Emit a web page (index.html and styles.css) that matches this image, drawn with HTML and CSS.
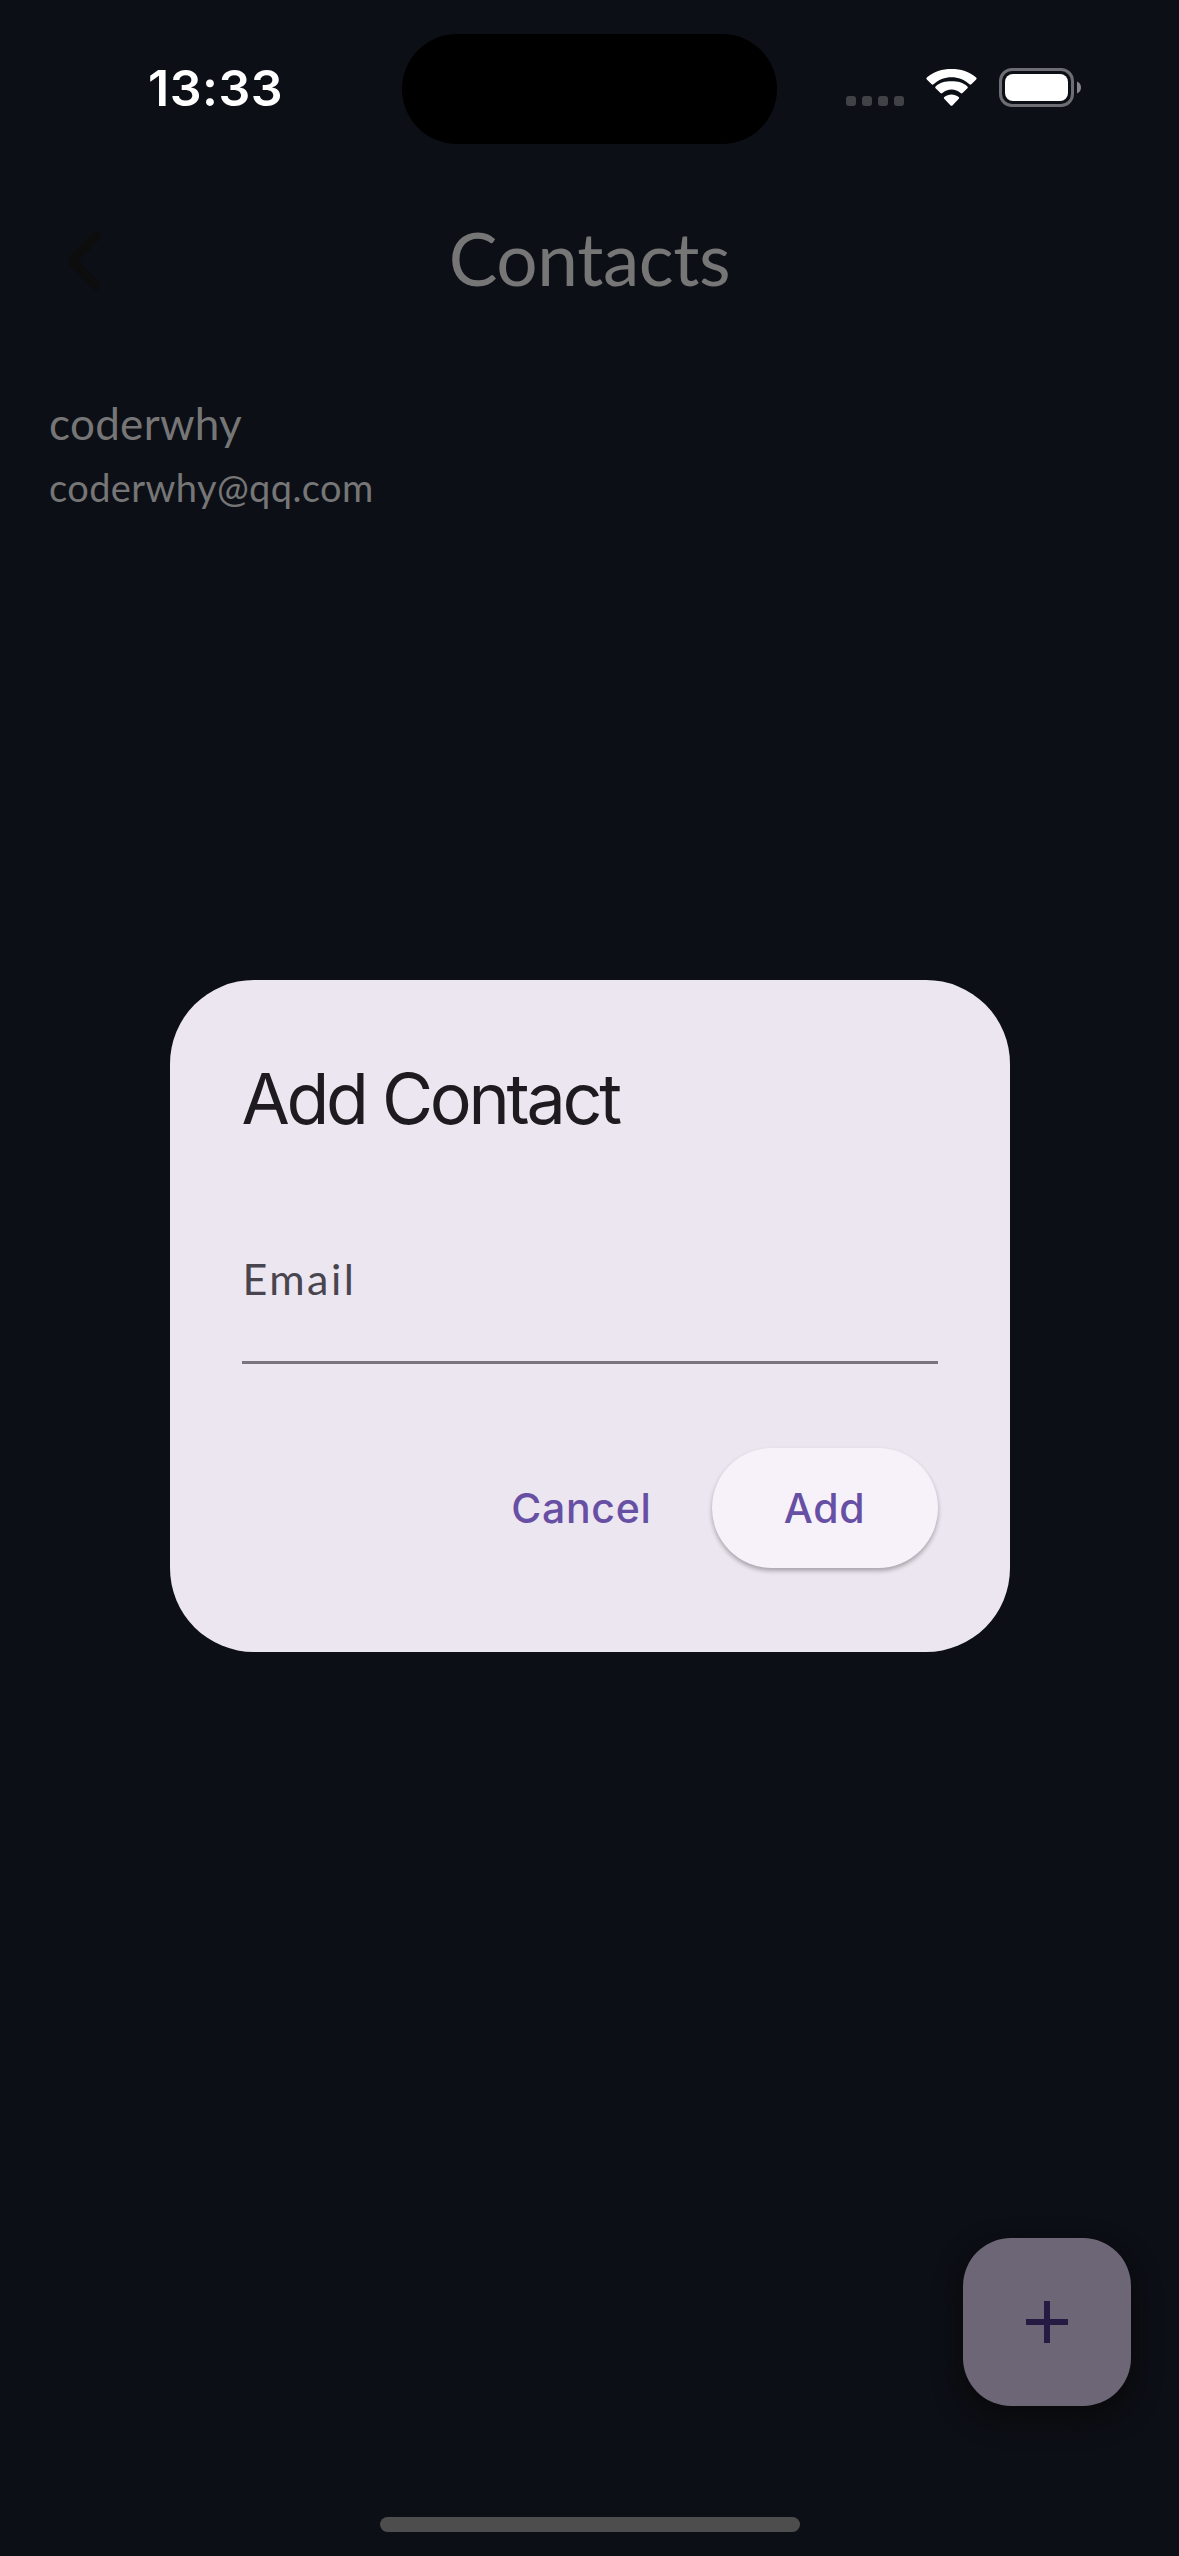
FILE: index.html
```html
<!DOCTYPE html>
<html lang="en">
<head>
<meta charset="utf-8">
<title>Contacts</title>
<link rel="stylesheet" href="styles.css">
</head>
<body>
<div class="screen">
  <header class="status-bar">
    <div class="clock">13:33</div>
    <div class="island"></div>
    <div class="indicators">
      <div class="signal"><i></i><i></i><i></i><i></i></div>
      <svg class="wifi" width="51" height="38" viewBox="0 0 51 38" fill="#fff">
        <path d="M25.5 8.2c6.700 0 13 2.500 18 7.100.6.500 1.300.500 1.800 0l4.900-4.900c.6-.6.5-1.300 0-1.800C43.500 2.400 34.800 0 25.500 0S7.500 2.400.8 8.600c-.5.5-.6 1.200 0 1.800l4.900 4.900c.5.5 1.200.5 1.800 0 5-4.600 11.300-7.100 18-7.100z"/>
        <path d="M25.500 20.500c3.500 0 6.600 1.300 9.100 3.600.6.600 1.300.6 1.900 0l4.900-4.900c.5-.5.5-1.200 0-1.800-4.200-4-9.700-5.200-15.900-5.200s-11.700 1.200-15.900 5.200c-.5.6-.5 1.300 0 1.800l4.900 4.900c.6.6 1.300.6 1.900 0 2.500-2.300 5.600-3.600 9.100-3.600z"/>
        <path d="M32.700 28c.6.500.6 1.100.1 1.700l-6.400 6.700c-.6.600-1.200.6-1.800 0l-6.400-6.700c-.5-.6-.5-1.200.1-1.700 4.100-3.500 10.300-3.500 14.400 0z"/>
      </svg>
      <svg class="battery" width="82" height="39" viewBox="0 0 82 39">
        <rect x="1.500" y="1.500" width="72" height="36" rx="11.500" fill="none" stroke="#6d6e73" stroke-width="3"/>
        <rect x="6" y="6" width="63" height="27" rx="8" fill="#fff"/>
        <path d="M78 13.500c2.500 1 4 3.300 4 6s-1.500 5-4 6z" fill="#85868a"/>
      </svg>
    </div>
  </header>

  <nav class="app-bar">
    <svg class="back" width="36" height="60" viewBox="0 0 36 60" fill="none" stroke="#0d0d0d" stroke-width="9" stroke-linecap="round" stroke-linejoin="round">
      <path d="M30 5L6 30L30 55"/>
    </svg>
    <h1 class="title">Contacts</h1>
  </nav>

  <main class="contact">
    <div class="name">coderwhy</div>
    <div class="mail">coderwhy@qq.com</div>
  </main>

  <div class="overlay">
    <section class="dialog">
      <h2 class="dialog-title">Add Contact</h2>
      <div class="field"><span class="label">Email</span></div>
      <div class="actions">
        <span class="button">Cancel</span>
        <span class="button raised">Add</span>
      </div>
    </section>
  </div>

  <div class="fab">
    <svg width="42" height="42" viewBox="0 0 42 42" fill="#251a42"><path d="M18 0h6v18h18v6H24v18h-6V24H0v-6h18z"/></svg>
  </div>
  <div class="home-indicator"></div>
</div>
</body>
</html>
```
FILE: styles.css
```css
body {
  margin: 0;
  background: #0c0f16;
}

.screen {
  position: relative;
  width: 1179px;
  height: 2556px;
  overflow: hidden;
  background: #0c0f16;
  font-family: Lato, "Open Sans", sans-serif;
  color: #767676;
}

.status-bar {
  display: grid;
  grid-template-columns: 402px 375px 1fr;
  height: 177px;
  align-items: start;
}

.clock {
  padding: 58px 0 0 148px;
  font: 600 50px/60px Inter, sans-serif;
  letter-spacing: 0.5px;
  color: #fff;
}

.island {
  height: 110px;
  margin-top: 34px;
  border-radius: 55px;
  background: #000;
}

.indicators {
  display: flex;
  align-items: flex-start;
  padding: 68px 0 0 69px;
}

.signal {
  display: flex;
  gap: 6px;
  padding-top: 28px;
}

.signal i {
  width: 10px;
  height: 10px;
  border-radius: 3px;
  background: #414246;
}

.wifi {
  margin: 1px 0 0 22px;
}

.battery {
  margin-left: 22px;
}

.app-bar {
  display: grid;
  grid-template-columns: 200px 1fr 200px;
  align-items: center;
  height: 168px;
}

.back {
  margin-left: 66px;
}

.title {
  margin: 0;
  padding-bottom: 7px;
  font-size: 73px;
  font-weight: 400;
  line-height: 88px;
  letter-spacing: -0.4px;
  text-align: center;
}

.contact {
  display: flex;
  flex-direction: column;
  padding: 46px 48px 0 49px;
}

.name {
  font-size: 44px;
  line-height: 64px;
  letter-spacing: 0.3px;
}

.mail {
  padding-top: 2px;
  font-size: 38px;
  line-height: 60px;
  letter-spacing: 0.4px;
}

.overlay {
  position: absolute;
  inset: 0;
  display: flex;
  align-items: center;
  justify-content: center;
  padding-top: 75px;
}

.dialog {
  display: flex;
  flex-direction: column;
  box-sizing: border-box;
  width: 840px;
  height: 672px;
  padding: 72px;
  border-radius: 84px;
  background: #ece6f0;
}

.dialog-title {
  margin: 0;
  font: 400 70px/94px Inter, sans-serif;
  letter-spacing: -3.3px;
  color: #1d1b20;
}

.field {
  height: 147px;
  margin-top: 71px;
  border-bottom: 3px solid #79747e;
  box-sizing: border-box;
}

.label {
  display: block;
  padding: 32px 0 0 1px;
  font-size: 43px;
  line-height: 60px;
  letter-spacing: 2.5px;
  color: #49454f;
}

.actions {
  display: flex;
  justify-content: flex-end;
  gap: 24px;
  margin-top: 84px;
}

.button {
  display: flex;
  align-items: center;
  height: 120px;
  padding: 0 36px;
  border-radius: 60px;
  font: 500 41px/60px Inter, sans-serif;
  letter-spacing: 0.7px;
  color: #6750a4;
}

.raised {
  box-sizing: border-box;
  width: 226px;
  justify-content: center;
  padding: 0;
  background: #f7f2fa;
  box-shadow: 0 3px 4px rgba(0, 0, 0, 0.25), 0 2px 6px rgba(0, 0, 0, 0.05);
}

.fab {
  position: absolute;
  right: 48px;
  bottom: 150px;
  display: flex;
  align-items: center;
  justify-content: center;
  width: 168px;
  height: 168px;
  border-radius: 48px;
  background: #6d6676;
  box-shadow: 0 9px 15px rgba(8, 9, 11, 0.6), 0 12px 24px 4px #0e0e10;
}

.home-indicator {
  position: absolute;
  left: 380px;
  bottom: 24px;
  width: 420px;
  height: 15px;
  border-radius: 8px;
  background: #4d4d4d;
}
```
